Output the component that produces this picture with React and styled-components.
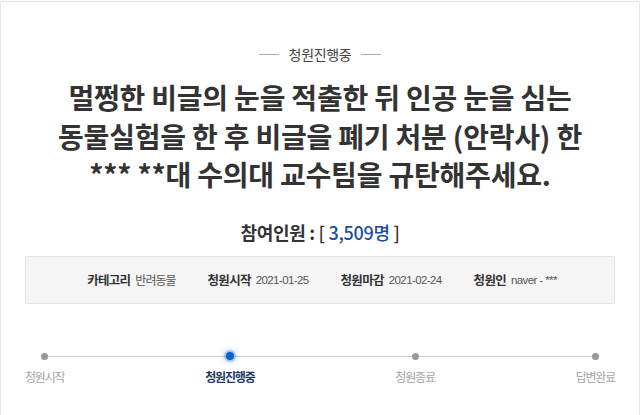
import React from "react";
import styled, { createGlobalStyle } from "styled-components";

const Global = createGlobalStyle`
  html, body { margin: 0; padding: 0; background: #fff; }
  body { font-family: "Noto Sans CJK KR", "Noto Sans", sans-serif; color: #333; }
  * { box-sizing: border-box; }
`;

const Panel = styled.div`
  margin-top: 1px;
  width: 640px;
  min-height: calc(100vh - 1px);
  border: 1px solid #e4e4e4;
  border-bottom: none;
  padding-top: 42px;
  display: flex;
  flex-direction: column;
  align-items: stretch;
`;

const Status = styled.div`
  display: flex;
  align-items: center;
  justify-content: center;
  gap: 10px;
  font-size: 14px;
  line-height: 20px;
  color: #444;
  letter-spacing: -0.3px;
  &::before, &::after {
    content: "";
    width: 20px;
    height: 1px;
    background: #a8a8a8;
  }
`;

const Title = styled.h1`
  margin: 14px 0 0;
  text-align: center;
  font-size: 28px;
  line-height: 38.5px;
  font-weight: 700;
  color: #333;
  letter-spacing: -0.2px;
`;

const Count = styled.div`
  margin-top: 26px;
  text-align: center;
  font-size: 18px;
  line-height: 24px;
  font-weight: 700;
  color: #333;
  letter-spacing: -0.3px;
`;

const CountNum = styled.span`
  color: #1c4ea0;
  font-weight: 500;
`;

const Bracket = styled.span`
  font-weight: 500;
  color: #333;
`;

const InfoBox = styled.div`
  margin: 12px 24px 0;
  height: 48px;
  background: #f5f5f5;
  border: 1px solid #e2e2e2;
  border-radius: 3px;
  display: flex;
  align-items: center;
  justify-content: center;
  gap: 32px;
  padding-left: 4px;
`;

const InfoItem = styled.div`
  display: flex;
  align-items: center;
  gap: 5px;
  line-height: 16px;
`;

const InfoLabel = styled.span`
  font-size: 12.5px;
  font-weight: 700;
  color: #333;
  letter-spacing: -0.7px;
`;

const InfoValue = styled.span`
  color: #555;
  letter-spacing: ${(p) => (p.$latin ? "-0.6px" : "-1px")};
  font-family: ${(p) =>
    p.$latin
      ? '"Liberation Sans", "Noto Sans CJK KR", sans-serif'
      : '"Noto Sans CJK KR", sans-serif'};
  font-size: ${(p) => (p.$latin ? "11.5px" : "12px")};
`;

const Timeline = styled.div`
  position: relative;
  margin-top: 47px;
  padding: 0 24px;
  display: flex;
  justify-content: space-between;
  &::before {
    content: "";
    position: absolute;
    left: 44px;
    right: 44px;
    top: 5px;
    height: 1px;
    background: #cfcfcf;
  }
`;

const Step = styled.div`
  position: relative;
  display: flex;
  flex-direction: column;
  align-items: center;
  gap: 9px;
`;

const Dot = styled.span`
  width: ${(p) => (p.$active ? "8px" : "7px")};
  height: ${(p) => (p.$active ? "8px" : "7px")};
  margin-top: ${(p) => (p.$active ? "1px" : "2px")};
  border-radius: 50%;
  background: ${(p) => (p.$active ? "#0a62cc" : "#999")};
  box-shadow: ${(p) =>
    p.$active ? "0 0 0 2px rgba(60,140,235,0.35), 0 0 4px 3px rgba(60,140,235,0.25)" : "none"};
`;

const StepLabel = styled.span`
  font-size: 12px;
  line-height: 16px;
  letter-spacing: -1.2px;
  color: ${(p) => (p.$active ? "#1f3a66" : "#a5a5a5")};
  font-weight: ${(p) => (p.$active ? 700 : 400)};
`;

const steps = ["청원시작", "청원진행중", "청원종료", "답변완료"];

export default function App() {
  return (
    <>
      <Global />
      <Panel>
        <Status>청원진행중</Status>
        <Title>
          멀쩡한 비글의 눈을 적출한 뒤 인공 눈을 심는
          <br />
          동물실험을 한 후 비글을 폐기 처분 (안락사) 한
          <br />
          *** **대 수의대 교수팀을 규탄해주세요.
        </Title>
        <Count>
          참여인원 : <Bracket>[</Bracket> <CountNum>3,509명</CountNum> <Bracket>]</Bracket>
        </Count>
        <InfoBox>
          <InfoItem>
            <InfoLabel>카테고리</InfoLabel>
            <InfoValue>반려동물</InfoValue>
          </InfoItem>
          <InfoItem>
            <InfoLabel>청원시작</InfoLabel>
            <InfoValue $latin>2021-01-25</InfoValue>
          </InfoItem>
          <InfoItem>
            <InfoLabel>청원마감</InfoLabel>
            <InfoValue $latin>2021-02-24</InfoValue>
          </InfoItem>
          <InfoItem>
            <InfoLabel>청원인</InfoLabel>
            <InfoValue $latin>naver - ***</InfoValue>
          </InfoItem>
        </InfoBox>
        <Timeline>
          {steps.map((s, i) => (
            <Step key={s}>
              <Dot $active={i === 1} />
              <StepLabel $active={i === 1}>{s}</StepLabel>
            </Step>
          ))}
        </Timeline>
      </Panel>
    </>
  );
}
